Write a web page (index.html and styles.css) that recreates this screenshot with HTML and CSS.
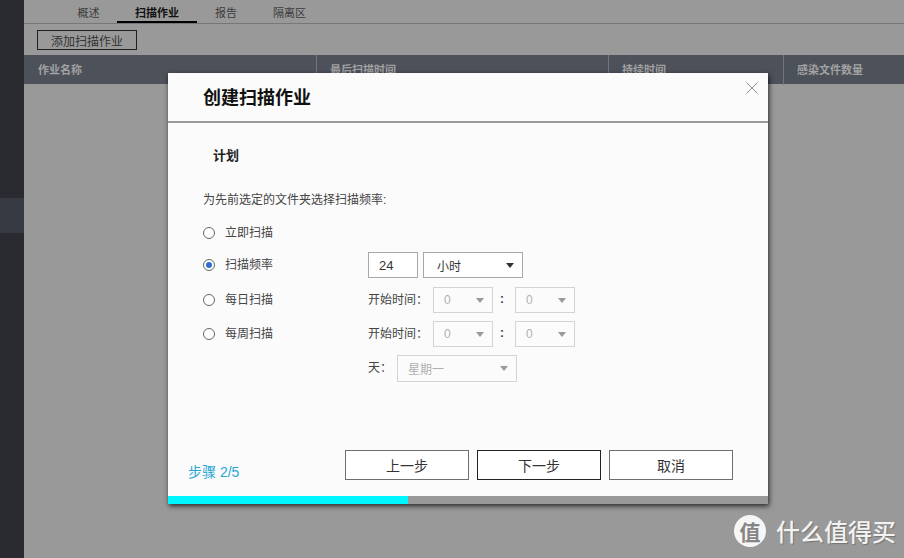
FILE: index.html
```html
<!DOCTYPE html>
<html lang="zh">
<head>
<meta charset="utf-8">
<title>创建扫描作业</title>
<link rel="stylesheet" href="styles.css">
</head>
<body>
<div class="app">
  <aside class="sidebar"><div class="side-active"></div></aside>
  <main class="main">
    <nav class="tabs">
      <span class="tab tab-a">概述</span>
      <span class="tab tab-b active">扫描作业</span>
      <span class="tab tab-c">报告</span>
      <span class="tab tab-d">隔离区</span>
    </nav>
    <div class="toolbar"><button class="add-btn">添加扫描作业</button></div>
    <div class="thead">
      <div class="th">作业名称</div>
      <div class="th">最后扫描时间</div>
      <div class="th">持续时间</div>
      <div class="th">感染文件数量</div>
    </div>
  </main>
</div>

<section class="modal">
  <header class="modal-head">
    <h1 class="modal-title">创建扫描作业</h1>
    <svg class="close" width="14" height="14" viewBox="0 0 14 14"><path d="M1.5 1.5 L12.5 12.5 M12.5 1.5 L1.5 12.5" stroke="#8f8f8f" stroke-width="1" fill="none"/></svg>
  </header>
  <div class="modal-body">
    <h2 class="section">计划</h2>
    <p class="desc">为先前选定的文件夹选择扫描频率:</p>
    <div class="form">
      <label class="radio-row"><span class="radio"></span>立即扫描</label>
      <div></div>

      <label class="radio-row"><span class="radio on"></span>扫描频率</label>
      <div class="ctl">
        <span class="box input">24</span>
        <span class="box sel sel-unit">小时<i class="caret"></i></span>
      </div>

      <label class="radio-row"><span class="radio"></span>每日扫描</label>
      <div class="ctl">
        <span class="lbl">开始时间：</span>
        <span class="box sel sel-num off">0<i class="caret"></i></span>
        <span class="colon">:</span>
        <span class="box sel sel-num off">0<i class="caret"></i></span>
      </div>

      <label class="radio-row"><span class="radio"></span>每周扫描</label>
      <div class="ctl">
        <span class="lbl">开始时间：</span>
        <span class="box sel sel-num off">0<i class="caret"></i></span>
        <span class="colon">:</span>
        <span class="box sel sel-num off">0<i class="caret"></i></span>
      </div>

      <div></div>
      <div class="ctl">
        <span class="lbl lbl-day">天：</span>
        <span class="box sel sel-day off">星期一<i class="caret"></i></span>
      </div>
    </div>
  </div>
  <footer class="modal-foot">
    <span class="step">步骤 2/5</span>
    <div class="actions">
      <button class="btn">上一步</button>
      <button class="btn primary">下一步</button>
      <button class="btn">取消</button>
    </div>
  </footer>
  <div class="progress"><div class="progress-fill"></div></div>
</section>

<div class="watermark">
  <span class="wm-logo">值</span>
  <span class="wm-text">什么值得买</span>
</div>
</body>
</html>
```
FILE: styles.css
```css
* { box-sizing: border-box; }
html, body { margin: 0; height: 100%; overflow: hidden; }
body {
  background: #999999;
  font-family: "Liberation Sans", "Noto Sans CJK SC", sans-serif;
  color: #333;
  font-size: 12px;
}
.app { display: flex; height: 558px; }
.sidebar { width: 24px; background: #2a2b30; padding-top: 198px; flex: none; }
.side-active { height: 35px; background: #363a42; }
.main { flex: 1; }

.tabs { height: 24px; border-bottom: 1px solid #777; display: flex; font-size: 11px; color: #3c3c3c; }
.tab { height: 23px; line-height: 26px; text-align: center; }
.tab-a { margin-left: 53px; width: 23px; }
.tab-b { margin-left: 17px; width: 80px; font-weight: 700; color: #111; border-bottom: 2px solid #000; }
.tab-c { margin-left: 18px; width: 22px; }
.tab-d { margin-left: 36px; width: 33px; }

.toolbar { height: 31px; padding: 6px 0 0 13px; }
.add-btn {
  width: 100px; height: 20px; padding: 0;
  background: transparent; border: 1px solid #1f1f1f;
  font: 12px "Liberation Sans", "Noto Sans CJK SC", sans-serif; color: #333;
}

.thead { height: 29px; background: #4c515a; display: grid; grid-template-columns: 292px 292px 175px 1fr; }
.th { font-size: 11px; font-weight: 700; color: #a2a2a2; line-height: 30px; padding-left: 13px; border-left: 1px solid #71757c; }
.th:first-child { border-left: 0; padding-left: 14px; }

.modal {
  position: absolute; left: 168px; top: 73px;
  width: 600px; height: 431px;
  background: #fbfbfb;
  box-shadow: 1px 2px 5px rgba(0, 0, 0, .75);
  display: flex; flex-direction: column;
}
.modal-head { height: 50px; border-bottom: 2px solid #9a9a9a; padding-left: 35px; position: relative; flex: none; }
.modal-title { margin: 0; font-size: 18px; font-weight: 700; line-height: 50px; color: #111; }
.close { position: absolute; right: 9px; top: 8px; }

.modal-body { flex: 1; padding: 0 0 0 35px; }
.section { margin: 0 0 0 10px; padding-top: 24px; font-size: 13px; font-weight: 700; line-height: 18px; color: #222; }
.desc { margin: 26px 0 0; line-height: 18px; color: #444; }

.form {
  margin-top: 11px;
  display: grid;
  grid-template-columns: 165px 1fr;
  grid-template-rows: 32px 35px 34px 34px 27px;
  align-items: start;
}
.radio-row { display: flex; align-items: flex-start; height: 26px; line-height: 26px; color: #444; }
.radio {
  width: 12px; height: 12px; margin: 7px 10px 0 0; border: 1px solid #666; border-radius: 50%;
  background: #fff; display: flex; align-items: center; justify-content: center; flex: none;
}
.radio.on::after { content: ""; width: 6px; height: 6px; border-radius: 50%; background: #2f6fd0; }

.ctl { display: flex; align-items: center; height: 26px; color: #444; }
.box {
  display: flex; align-items: center; height: 26px; background: #fff;
  border: 1px solid #a8a8a8; color: #333; position: relative;
}
.input { width: 50px; padding-left: 10px; font-size: 13px; }
.sel { padding-left: 13px; }
.sel-unit { width: 100px; margin-left: 5px; }
.sel-num { width: 60px; padding-left: 10px; }
.sel-day { width: 120px; height: 27px; padding-left: 10px; }
.off { background: #fbfbfb; border-color: #d4d4d4; color: #b0b0b0; }
.caret {
  position: absolute; right: 8px; top: 10px; width: 0; height: 0;
  border-left: 4px solid transparent; border-right: 4px solid transparent; border-top: 5px solid #333;
}
.off .caret { border-top-color: #9a9a9a; }
.lbl { width: 65px; flex: none; padding-bottom: 4px; }
.lbl-day { width: 29px; }
.colon { width: 22px; padding: 0 0 2px 7px; font-weight: 700; color: #444; }

.modal-foot { height: 46px; flex: none; display: flex; justify-content: space-between; padding: 0 35px 0 20px; }
.step { font-size: 14px; color: #2aa5d6; line-height: 16px; padding-top: 14px; }
.actions { display: flex; gap: 8px; height: 30px; }
.btn {
  width: 124px; height: 30px; padding: 0 0 1px; background: #fff;
  border: 1px solid #6f6f6f; font: 14px "Liberation Sans", "Noto Sans CJK SC", sans-serif; color: #333;
}
.primary { border-color: #222; }

.progress { height: 8px; background: #999; flex: none; }
.progress-fill { width: 240px; height: 100%; background: #00f6ff; }

.watermark { position: absolute; left: 734px; top: 515px; display: flex; align-items: center; gap: 10px; }
.wm-logo {
  width: 32px; height: 32px; border-radius: 50%; background: #f6f6f6; color: #858585;
  font: 700 21px/32px "Noto Sans CJK SC", sans-serif; text-align: center;
}
.wm-text {
  font: 500 24px/32px "Noto Sans CJK SC", sans-serif; color: #f2f2f2;
  text-shadow: 1px 1px 1px rgba(0, 0, 0, .25);
}
```
